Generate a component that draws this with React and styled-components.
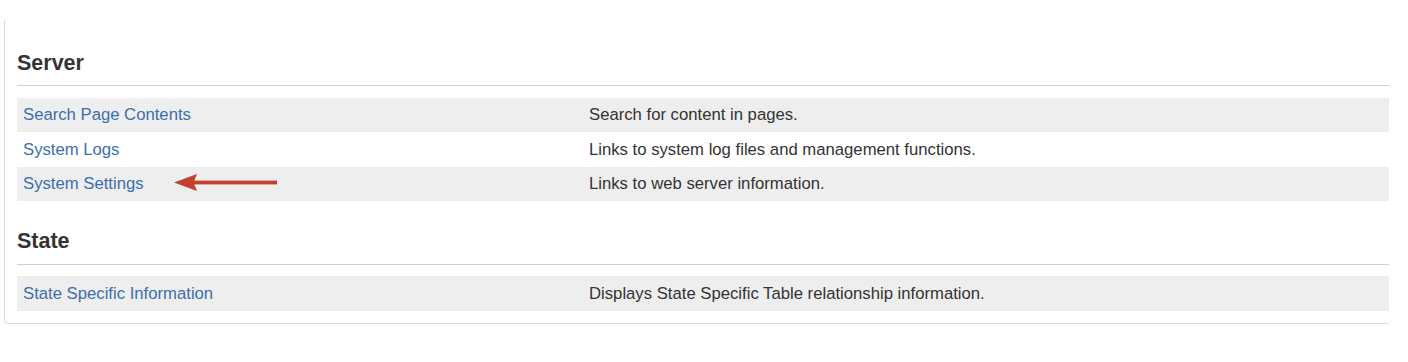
import React from "react"
import styled, { createGlobalStyle } from "styled-components"

const GlobalStyle = createGlobalStyle`
  html, body {
    margin: 0;
    padding: 0;
    background: #fff;
    font-family: "Liberation Sans", Arial, sans-serif;
  }
`

const Panel = styled.div`
  display: flow-root;
  margin: 20px 0 0 4px;
  width: 1372px;
  padding: 0 0 12px 12px;
  border-left: 1px solid #d9d9d9;
  border-bottom: 1px solid #d9d9d9;
  border-bottom-left-radius: 5px;
`

const Heading = styled.h2`
  margin: ${(p) => (p.first ? "30.5px" : "28px")} 0 0;
  padding: 0 0 9.5px;
  font-size: 21.5px;
  line-height: 25px;
  font-weight: bold;
  color: #333;
  border-bottom: 1px solid #cfcfcf;
`

const Table = styled.div`
  margin-top: 11.5px;
`

const Row = styled.div`
  display: grid;
  grid-template-columns: 566px 1fr;
  height: 34.5px;
  align-items: center;
  background: ${(p) => (p.shaded ? "#eeeeee" : "#fff")};
`

const Cell = styled.div`
  position: relative;
  padding: 1px 6px 0;
  font-size: 16.7px;
  color: #333;
`

const Link = styled.a`
  color: #3b6fae;
  text-decoration: none;
`

const Arrow = styled.svg`
  position: absolute;
  left: 157px;
  top: 50%;
  margin-top: -10.5px;
`

const RedArrow = () => (
  <Arrow width="106" height="20" viewBox="0 0 106 20">
    <path d="M0 9.5 L23 1 L19.5 9.5 L23 18 Z" fill="#c1402e" />
    <rect x="19" y="7.6" width="84" height="3.8" fill="#c1402e" />
  </Arrow>
)

const sections = [
  {
    title: "Server",
    rows: [
      ["Search Page Contents", "Search for content in pages."],
      ["System Logs", "Links to system log files and management functions."],
      ["System Settings", "Links to web server information.", true],
    ],
  },
  {
    title: "State",
    rows: [
      [
        "State Specific Information",
        "Displays State Specific Table relationship information.",
      ],
    ],
  },
]

const App = () => {
  return (
    <>
      <GlobalStyle />
      <Panel>
        {sections.map((s, i) => (
          <React.Fragment key={s.title}>
            <Heading first={i === 0}>{s.title}</Heading>
            <Table>
              {s.rows.map((r, j) => (
                <Row key={r[0]} shaded={j % 2 === 0}>
                  <Cell>
                    <Link href="#">{r[0]}</Link>
                    {r[2] && <RedArrow />}
                  </Cell>
                  <Cell>{r[1]}</Cell>
                </Row>
              ))}
            </Table>
          </React.Fragment>
        ))}
      </Panel>
    </>
  )
}

export default App
